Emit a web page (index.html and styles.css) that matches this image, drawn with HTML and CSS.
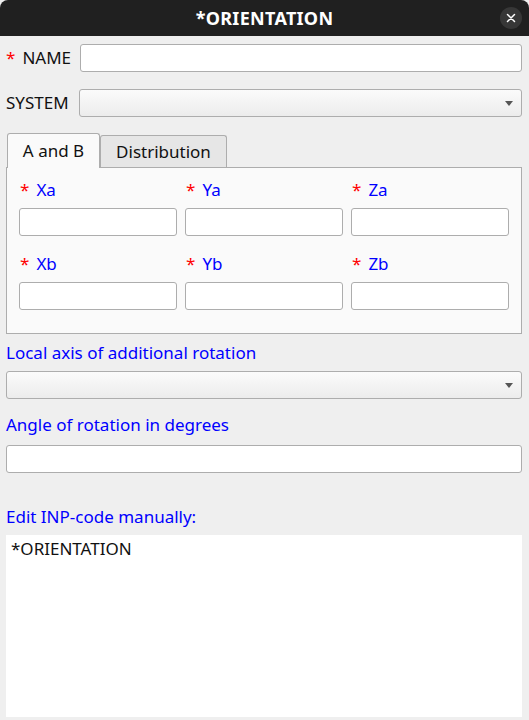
FILE: index.html
```html
<!DOCTYPE html>
<html>
<head>
<meta charset="utf-8">
<link rel="stylesheet" href="styles.css">
</head>
<body>
<div class="window">
  <div class="titlebar">
    <span class="title">*ORIENTATION</span>
    <span class="close"><svg width="10" height="10" viewBox="0 0 10 10"><path d="M1.5 1.5L8.5 8.5M8.5 1.5L1.5 8.5" stroke="#ffffff" stroke-width="1.5" stroke-linecap="round"/></svg></span>
  </div>
  <div class="content">
    <div class="row row-name">
      <span class="lblbox name-box"><span class="req">*</span><span class="lbl">NAME</span></span>
      <div class="input grow"></div>
    </div>
    <div class="row row-system">
      <span class="lblbox system-box"><span class="lbl">SYSTEM</span></span>
      <div class="combo grow"><span class="arrow"></span></div>
    </div>
    <div class="tabs">
      <div class="tab active">A and B</div>
      <div class="tab inactive">Distribution</div>
    </div>
    <div class="pane">
      <div class="field"><div class="flabel"><span class="req">*</span>Xa</div><div class="input"></div></div>
      <div class="field"><div class="flabel"><span class="req">*</span>Ya</div><div class="input"></div></div>
      <div class="field"><div class="flabel"><span class="req">*</span>Za</div><div class="input"></div></div>
      <div class="field"><div class="flabel"><span class="req">*</span>Xb</div><div class="input"></div></div>
      <div class="field"><div class="flabel"><span class="req">*</span>Yb</div><div class="input"></div></div>
      <div class="field"><div class="flabel"><span class="req">*</span>Zb</div><div class="input"></div></div>
    </div>
    <div class="blabel l-axis">Local axis of additional rotation</div>
    <div class="combo wide c-axis"><span class="arrow"></span></div>
    <div class="blabel l-angle">Angle of rotation in degrees</div>
    <div class="input wide i-angle"></div>
    <div class="blabel l-edit">Edit INP-code manually:</div>
    <div class="code">*ORIENTATION</div>
  </div>
</div>
</body>
</html>
```
FILE: styles.css
```css
html, body {
  margin: 0;
  padding: 0;
  background: #efefef;
}
body {
  font-family: "Noto Sans", "Open Sans", sans-serif;
  font-size: 17px;
  color: #111;
  width: 529px;
  height: 720px;
  overflow: hidden;
}
.window {
  width: 529px;
  height: 720px;
  display: flex;
  flex-direction: column;
}
.titlebar {
  height: 36px;
  background: #202020;
  border-radius: 8px 8px 0 0;
  display: flex;
  align-items: center;
  justify-content: center;
  position: relative;
  flex: none;
}
.title {
  color: #ffffff;
  font-weight: bold;
  font-size: 18px;
  letter-spacing: 0.3px;
  line-height: 36px;
}
.close {
  position: absolute;
  right: 7px;
  top: 7px;
  width: 22px;
  height: 22px;
  border-radius: 50%;
  background: #373737;
  display: flex;
  align-items: center;
  justify-content: center;
}
.content {
  padding: 0 7px 0 6px;
  display: flex;
  flex-direction: column;
}
.row {
  display: flex;
  align-items: center;
  height: 28px;
}
.row-name {
  margin-top: 8px;
}
.row-system {
  margin-top: 17px;
}
.lblbox {
  display: flex;
  align-items: center;
  flex: none;
  padding-bottom: 2px;
}
.name-box {
  width: 74px;
}
.system-box {
  width: 73px;
}
.req {
  color: #ff0000;
  margin-right: 7px;
}
.grow {
  flex: 1;
}
.input {
  height: 28px;
  box-sizing: border-box;
  background: #ffffff;
  border: 1px solid #adadad;
  border-radius: 3px;
}
.combo {
  height: 28px;
  box-sizing: border-box;
  background: linear-gradient(#fbfbfb, #ececec);
  border: 1px solid #adadad;
  border-radius: 3px;
  position: relative;
}
.arrow {
  position: absolute;
  right: 8px;
  top: 11px;
  width: 0;
  height: 0;
  border-left: 4.5px solid transparent;
  border-right: 4.5px solid transparent;
  border-top: 5px solid #555;
}
.tabs {
  display: flex;
  align-items: flex-end;
  margin-top: 16px;
  margin-left: 1px;
  height: 34px;
  position: relative;
  z-index: 1;
}
.tab {
  box-sizing: border-box;
  border: 1px solid #adadad;
  border-bottom: none;
  border-radius: 3px 3px 0 0;
  background: #e6e6e6;
  height: 32px;
  display: flex;
  align-items: center;
  justify-content: center;
}
.tab.active {
  background: #fafafa;
  height: 35px;
  margin-bottom: -1px;
  width: 93px;
  padding-bottom: 2px;
}
.tab.inactive {
  width: 127px;
}
.pane {
  box-sizing: border-box;
  width: 516px;
  height: 167px;
  background: #fafafa;
  border: 1px solid #adadad;
  padding: 11px 12px 0 12px;
  display: grid;
  grid-template-columns: repeat(3, 158px);
  column-gap: 8px;
  row-gap: 17px;
  align-content: start;
}
.field {
  display: flex;
  flex-direction: column;
}
.flabel {
  color: #0000ff;
  height: 22px;
  margin-bottom: 7px;
  padding-left: 1px;
  line-height: 22px;
}
.blabel {
  color: #0000ff;
  height: 22px;
  line-height: 22px;
}
.l-axis {
  margin-top: 8px;
  margin-bottom: 7px;
}
.wide {
  width: 516px;
}
.l-angle {
  margin-top: 15px;
  margin-bottom: 9px;
}
.l-edit {
  margin-top: 33px;
  margin-bottom: 7px;
}
.code {
  width: 516px;
  height: 182px;
  background: #ffffff;
  box-sizing: border-box;
  padding: 3px 5px 0 5px;
  color: #111;
  line-height: 22px;
}
```
